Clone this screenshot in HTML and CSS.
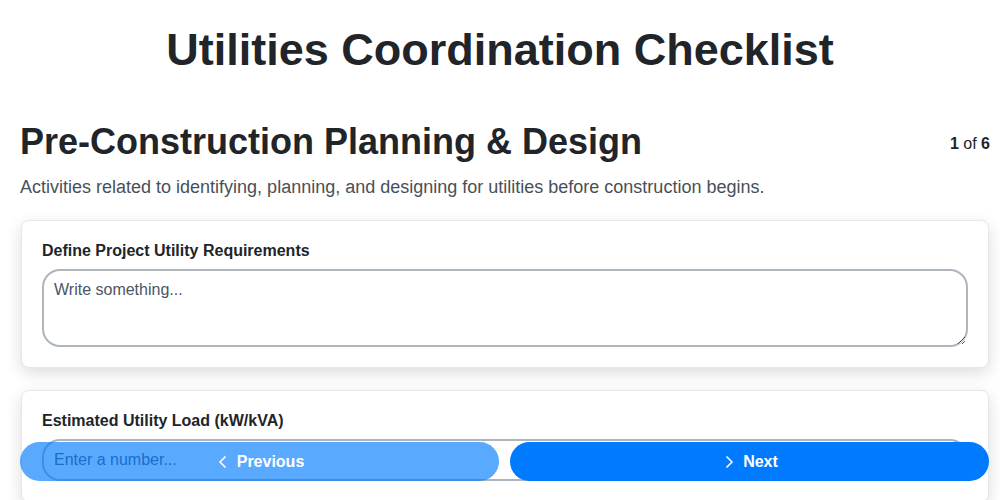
FILE: index.html
```html
<!DOCTYPE html>
<html>
<head>
<meta charset="utf-8">
<link rel="stylesheet" href="styles.css">
</head>
<body>
<div class="page">
  <h1 class="title">Utilities Coordination Checklist</h1>
  <div class="section-head">
    <h2 class="section-title">Pre-Construction Planning &amp; Design</h2>
    <div class="counter"><b>1</b> of <b>6</b></div>
  </div>
  <p class="section-desc">Activities related to identifying, planning, and designing for utilities before construction begins.</p>
  <div class="card">
    <label class="field-label">Define Project Utility Requirements</label>
    <textarea class="textarea" placeholder="Write something..."></textarea>
  </div>
  <div class="card">
    <label class="field-label">Estimated Utility Load (kW/kVA)</label>
    <input class="input" type="text" placeholder="Enter a number...">
  </div>
</div>
<div class="nav">
  <button class="btn btn-prev">
    <svg width="16" height="16" viewBox="0 0 16 16"><path d="M10.5 2.5 5 8l5.5 5.5" fill="none" stroke="#fff" stroke-width="1.6"/></svg>
    Previous
  </button>
  <button class="btn btn-next">
    <svg width="16" height="16" viewBox="0 0 16 16"><path d="M5.5 2.5 11 8l-5.5 5.5" fill="none" stroke="#fff" stroke-width="1.6"/></svg>
    Next
  </button>
</div>
</body>
</html>
```
FILE: styles.css
```css
* { box-sizing: border-box; }
html, body {
  margin: 0;
  padding: 0;
  background: #fff;
  font-family: "Liberation Sans", Arial, sans-serif;
  color: #212529;
}
.page {
  padding: 0 10px 0 20px;
}
.title {
  text-align: center;
  font-size: 45px;
  font-weight: 700;
  margin: 0 0 0 -10px;
  padding-top: 25px;
  line-height: 50px;
}
.section-head {
  display: flex;
  justify-content: space-between;
  align-items: flex-start;
  margin-top: 46px;
}
.section-title {
  font-size: 36px;
  font-weight: 700;
  margin: 0;
  line-height: 42px;
}
.counter {
  font-size: 16px;
  margin-top: 14px;
  color: #212529;
}
.section-desc {
  font-size: 18px;
  color: #495057;
  margin: 12px 0 21px;
  line-height: 24px;
}
.card {
  background: #fff;
  border: 1px solid #e5e7eb;
  border-radius: 8px;
  box-shadow: 0 5px 16px rgba(0,0,0,0.14);
  padding: 19px 20px 20px;
  margin: 0 0 22px 1px;
  width: 968px;
}
.field-label {
  display: block;
  font-size: 16px;
  font-weight: 700;
  line-height: 22px;
  margin-bottom: 7px;
}
.textarea {
  display: block;
  width: 100%;
  height: 78px;
  border: 2px solid #adb5bd;
  border-radius: 18px;
  padding: 10px 10px 8px;
  font-family: "Liberation Sans", Arial, sans-serif;
  font-size: 16px;
  resize: vertical;
}
.textarea::placeholder, .input::placeholder {
  color: #4b5563;
}
.input {
  display: block;
  width: 100%;
  height: 42px;
  border: 2px solid #adb5bd;
  border-radius: 18px;
  padding: 8px 10px;
  font-family: "Liberation Sans", Arial, sans-serif;
  font-size: 16px;
}
.nav {
  position: fixed;
  left: 20px;
  right: 11px;
  bottom: 19px;
  display: flex;
  gap: 11px;
}
.btn {
  flex: 1;
  height: 39px;
  border: none;
  border-radius: 20px;
  color: #fff;
  font-family: "Liberation Sans", Arial, sans-serif;
  font-size: 16px;
  font-weight: 700;
  display: flex;
  align-items: center;
  justify-content: center;
  gap: 6px;
  background: #007bff;
}
.btn-prev {
  opacity: 0.65;
}
```
